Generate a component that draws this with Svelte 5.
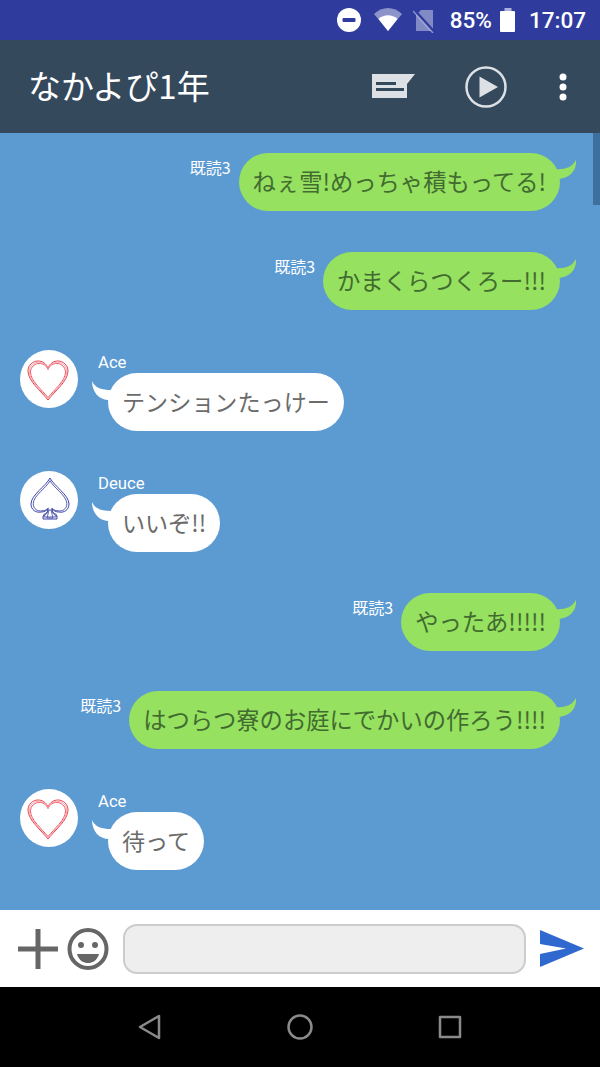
<script>
  const messages = [
    { side: 'me', text: 'ねぇ雪!めっちゃ積もってる!' },
    { side: 'me', text: 'かまくらつくろー!!!' },
    { side: 'them', who: 'Ace', text: 'テンションたっけー' },
    { side: 'them', who: 'Deuce', text: 'いいぞ!!' },
    { side: 'me', text: 'やったあ!!!!!' },
    { side: 'me', text: 'はつらつ寮のお庭にでかいの作ろう!!!!' },
    { side: 'them', who: 'Ace', text: '待って' }
  ];
  const heart = 'M28 50C21 41 8 31 8 21C8 15 13 11 18 11C22 11 26 13 28 18C30 13 34 11 38 11C43 11 48 15 48 21C48 31 35 41 28 50Z';
  const spade = 'M30 7C26 15 11 24 11 33C11 39 16 42 21 41C24 41 26 40 28 38C28 42 26 44 23 45V48H37V45C34 44 32 42 32 38C34 40 36 41 39 41C44 42 49 39 49 33C49 24 34 15 30 7Z';
</script>

<div class="phone">
  <div class="status">
    <svg class="ic" width="26" height="26" viewBox="0 0 26 26"><circle cx="13" cy="13" r="12" fill="#fff"/><rect x="6.500" y="11" width="13" height="4" rx="1" fill="#2f3c9e"/></svg>
    <svg class="ic wifi" width="30" height="24" viewBox="0 0 30 24"><path d="M1 7C9 -1 21 -1 29 7L15 24Z" fill="#fff" fill-opacity=".45"/><path d="M5.500 12C11 7 19 7 24.500 12L15 24Z" fill="#fff"/></svg>
    <svg class="ic sim" width="22" height="24" viewBox="0 0 22 24"><path d="M8 1H20V22H3V6Z" fill="#fff" fill-opacity=".4"/><path d="M1 1L21 23" stroke="#2f3c9e" stroke-width="3"/><path d="M0 2L20 24" stroke="#fff" stroke-opacity=".45" stroke-width="1.500"/></svg>
    <span class="pct">85%</span>
    <svg class="ic batt" width="16" height="24" viewBox="0 0 16 24"><rect x="4.500" width="7" height="3" fill="#fff" fill-opacity=".6"/><rect y="3" width="15" height="21" rx="1" fill="#fff"/></svg>
    <span class="time">17:07</span>
  </div>

  <header class="bar">
    <h1>なかよぴ1年</h1>
    <svg class="note" width="44" height="26" viewBox="0 0 44 26"><path d="M1 1H44L36 11V25H1Z" fill="#dde1e5"/><rect x="5" y="9" width="20" height="3" fill="#34495c"/><rect x="5" y="15" width="28" height="3" fill="#34495c"/></svg>
    <svg class="play" width="42" height="42" viewBox="0 0 42 42"><circle cx="21" cy="21" r="19.500" fill="none" stroke="#dde1e5" stroke-width="2.500"/><path d="M14.500 10.500L33 21L14.500 31.500Z" fill="#dde1e5"/></svg>
    <svg class="dots" width="8" height="28" viewBox="0 0 8 28"><circle cx="4" cy="4" r="3.500" fill="#fff"/><circle cx="4" cy="14" r="3.500" fill="#fff"/><circle cx="4" cy="24" r="3.500" fill="#fff"/></svg>
  </header>

  <main class="chat">
    <div class="scroll"></div>
    {#each messages as m}
      {#if m.side === 'me'}
        <div class="row me">
          <span class="read">既読3</span>
          <div class="bubble green">
            {m.text}
            <svg class="tail-r" width="22" height="22" viewBox="0 0 22 22"><path d="M0 9C8 10 17 8 21 0C22 10 15 18 4 19Z" fill="#96e15f"/></svg>
          </div>
        </div>
      {:else}
        <div class="row them">
          <div class="avatar">
            <svg width="58" height="58" viewBox="0 0 58 58" fill="none">
              {#if m.who === 'Ace'}
                <path d={heart} stroke="#e8424e" stroke-width="1"/>
                <path d={heart} stroke="#e8424e" stroke-width="1" transform="translate(3.500 3.800) scale(.875)"/>
                <path d={heart} stroke="#f2a0a6" stroke-width="1" transform="translate(1.800 1.900) scale(.9375)"/>
              {:else}
                <path d={spade} stroke="#3f45a6" stroke-width="1"/>
                <path d={spade} stroke="#3f45a6" stroke-width="1" transform="translate(3.500 3.500) scale(.885)"/>
                <path d="M27 47L29 39H31L33 47Z" stroke="#3f45a6" stroke-width=".8"/>
              {/if}
            </svg>
          </div>
          <div class="col">
            <span class="name">{m.who}</span>
            <div class="bubble white">
              {m.text}
              <svg class="tail-l" width="20" height="22" viewBox="0 0 20 22"><path d="M0 0C3 7 10 9 19 9L17 19C7 19 0 11 0 0Z" fill="#fff"/></svg>
            </div>
          </div>
        </div>
      {/if}
    {/each}
  </main>

  <div class="input">
    <svg width="40" height="40" viewBox="0 0 40 40"><path d="M0 17.500H40V22.500H0Z M17.500 0H22.500V40H17.500Z" fill="#666"/></svg>
    <svg class="smile" width="42" height="42" viewBox="0 0 42 42"><ellipse cx="21" cy="21" rx="18.500" ry="19" fill="none" stroke="#666" stroke-width="4"/><circle cx="14" cy="17" r="3" fill="#666"/><circle cx="28" cy="17" r="3" fill="#666"/><path d="M10 26H32C30 33 25 35 21 35C17 35 12 33 10 26Z" fill="#666"/></svg>
    <div class="box"></div>
    <svg class="send" width="44" height="37" viewBox="0 0 44 37"><path d="M0 0L44 18.500L0 37V24L26 18.500L0 14Z" fill="#2f68cf"/></svg>
  </div>

  <nav class="nav">
    <svg width="24" height="26" viewBox="0 0 24 26" fill="none" stroke="#8a8a8a" stroke-width="2.500" stroke-linejoin="round"><path d="M21 2V24L2 13Z"/></svg>
    <svg width="26" height="26" viewBox="0 0 26 26" fill="none" stroke="#8a8a8a" stroke-width="2.500"><circle cx="13" cy="13" r="11.500"/></svg>
    <svg width="24" height="24" viewBox="0 0 24 24" fill="none" stroke="#8a8a8a" stroke-width="2.500" stroke-linejoin="round"><rect x="2" y="2" width="20" height="20"/></svg>
  </nav>
</div>

<style>
:global(body) {
  margin: 0;
}

.phone {
  width: 600px;
  height: 1067px;
  display: flex;
  flex-direction: column;
  overflow: hidden;
  font-family: "Noto Sans CJK JP", sans-serif;
}

.status {
  height: 40px;
  background: #2f3c9e;
  color: #fff;
  display: flex;
  align-items: center;
  justify-content: flex-end;
  padding-right: 14px;
  font-family: Roboto, sans-serif;
  font-size: 22.500px;
  font-weight: 500;
}

.ic {
  display: block;
}

.wifi {
  margin-left: 11px;
  margin-top: -3px;
}

.sim {
  margin-left: 10px;
  margin-top: 2px;
}

.pct {
  margin-left: 15px;
}

.batt {
  margin-left: 8px;
}

.time {
  margin-left: 13px;
}

.bar {
  height: 93px;
  background: #34495c;
  display: flex;
  align-items: center;
  padding: 0 33px 0 28px;
}

.bar h1 {
  margin: 0 0 4px;
  flex: 1;
  font-size: 33px;
  font-weight: 400;
  color: #fff;
}

.note {
  margin-right: 50px;
  margin-top: -2px;
}

.play {
  margin-right: 52px;
}

.chat {
  flex: 1;
  position: relative;
  background: #5c9ad2;
  padding: 20.400px 40px 0 20px;
  display: flex;
  flex-direction: column;
  gap: 40.300px;
  overflow: hidden;
}

.scroll {
  position: absolute;
  top: 0;
  right: 0;
  width: 7px;
  height: 72px;
  background: #3f6f9c;
}

.row {
  display: flex;
}

.row.me {
  justify-content: flex-end;
  align-items: flex-start;
  gap: 8px;
}

.row.them {
  gap: 20px;
}

.read {
  color: #fff;
  font-size: 16px;
  margin-top: 4px;
  line-height: 20px;
}

.bubble {
  position: relative;
  height: 58px;
  line-height: 56px;
  border-radius: 29px;
  padding: 0 14px;
  font-size: 23.300px;
  white-space: nowrap;
}

.green {
  background: #96e15f;
  color: #426b30;
}

.white {
  background: #fff;
  color: #6b6b6b;
  margin-left: 10px;
  font-size: 23.100px;
}

.tail-r {
  position: absolute;
  top: 7px;
  right: -17px;
}

.tail-l {
  position: absolute;
  top: 8px;
  left: -16px;
}

.avatar {
  width: 58px;
  height: 58px;
  border-radius: 50%;
  background: #fff;
  flex: none;
}

.avatar svg {
  display: block;
}

.col {
  display: flex;
  flex-direction: column;
  align-items: flex-start;
}

.name {
  color: #fff;
  font-family: Roboto, sans-serif;
  font-size: 16.700px;
  line-height: 21px;
  padding-top: 2px;
}

.input {
  height: 77px;
  background: #fff;
  display: flex;
  align-items: center;
  padding: 0 16px 0 18px;
}

.smile {
  margin-left: 9px;
}

.box {
  flex: 1;
  height: 46px;
  margin: 0 14px 0 14px;
  background: #eee;
  border: 2px solid #ccc;
  border-radius: 14px;
}

.nav {
  height: 80px;
  background: #000;
  display: flex;
  align-items: center;
  justify-content: center;
  gap: 125px;
}

.nav svg {
  display: block;
}
</style>
